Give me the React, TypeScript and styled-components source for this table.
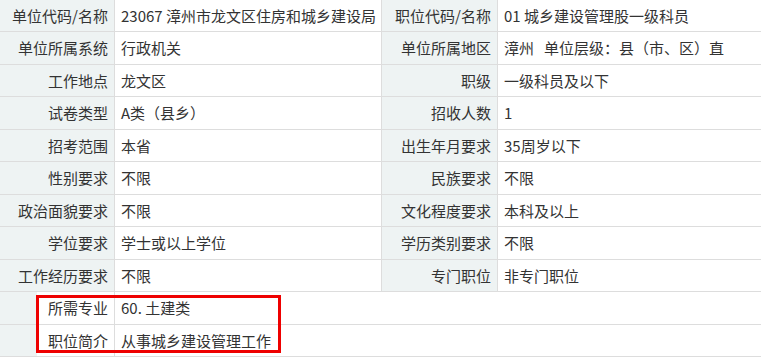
import styled, { createGlobalStyle } from "styled-components";

const GlobalStyle = createGlobalStyle`
  html, body {
    margin: 0;
    padding: 0;
    background: #ffffff;
    overflow: hidden;
  }
  body {
    font-family: "Noto Sans CJK SC", "Noto Sans", sans-serif;
  }
`;

type Pair = [string, string];

const rows: [Pair, Pair][] = [
  [["单位代码/名称", "23067 漳州市龙文区住房和城乡建设局"], ["职位代码/名称", "01 城乡建设管理股一级科员"]],
  [["单位所属系统", "行政机关"], ["单位所属地区", "漳州\u00a0\u00a0\u00a0单位层级：县（市、区）直"]],
  [["工作地点", "龙文区"], ["职级", "一级科员及以下"]],
  [["试卷类型", "A类（县乡）"], ["招收人数", "1"]],
  [["招考范围", "本省"], ["出生年月要求", "35周岁以下"]],
  [["性别要求", "不限"], ["民族要求", "不限"]],
  [["政治面貌要求", "不限"], ["文化程度要求", "本科及以上"]],
  [["学位要求", "学士或以上学位"], ["学历类别要求", "不限"]],
  [["工作经历要求", "不限"], ["专门职位", "非专门职位"]],
];

const wideRows: Pair[] = [
  ["所需专业", "60. 土建类"],
  ["职位简介", "从事城乡建设管理工作"],
];

export default function App() {
  return (
    <>
      <GlobalStyle />
      <Table>
        {rows.map(([left, right], i) => (
          <Row key={i}>
            <Label>{left[0]}</Label>
            <Value>{left[1]}</Value>
            <Label>{right[0]}</Label>
            <Value>{right[1]}</Value>
          </Row>
        ))}
        <WideGroup>
          {wideRows.map(([label, value], i) => (
            <WideRow key={i}>
              <Label $marked>{label}</Label>
              <Value>{value}</Value>
            </WideRow>
          ))}
          <Marker />
        </WideGroup>
      </Table>
    </>
  );
}

const Table = styled.div`
  margin-top: -0.5px;
  width: 761px;
  font-size: 15px;
  color: #333333;
`;

const Row = styled.div`
  display: grid;
  grid-template-columns: 115px 267px 116px 1fr;
  height: 32.5px;
  box-sizing: border-box;
  border-bottom: 1px solid #dddddd;
`;

const WideRow = styled(Row)`
  grid-template-columns: 115px 1fr;
`;

const Label = styled.div<{ $marked?: boolean }>`
  display: flex;
  align-items: center;
  justify-content: flex-end;
  padding-right: 6px;
  border-right: 1px solid #dddddd;
  background: ${(p) =>
    p.$marked
      ? "linear-gradient(to right, #eef3f3 37px, #ffffff 37px)"
      : "#eef3f3"};
  white-space: nowrap;
`;

const Value = styled.div`
  display: flex;
  align-items: center;
  padding-left: 6px;
  white-space: nowrap;
  overflow: hidden;
  border-right: 1px solid #dddddd;

  &:last-child {
    border-right: none;
  }
`;

const WideGroup = styled.div`
  position: relative;
`;

const Marker = styled.div`
  position: absolute;
  left: 36px;
  top: 3px;
  width: 245px;
  height: 58px;
  box-sizing: border-box;
  border: 3px solid #ee0000;
  pointer-events: none;
`;
